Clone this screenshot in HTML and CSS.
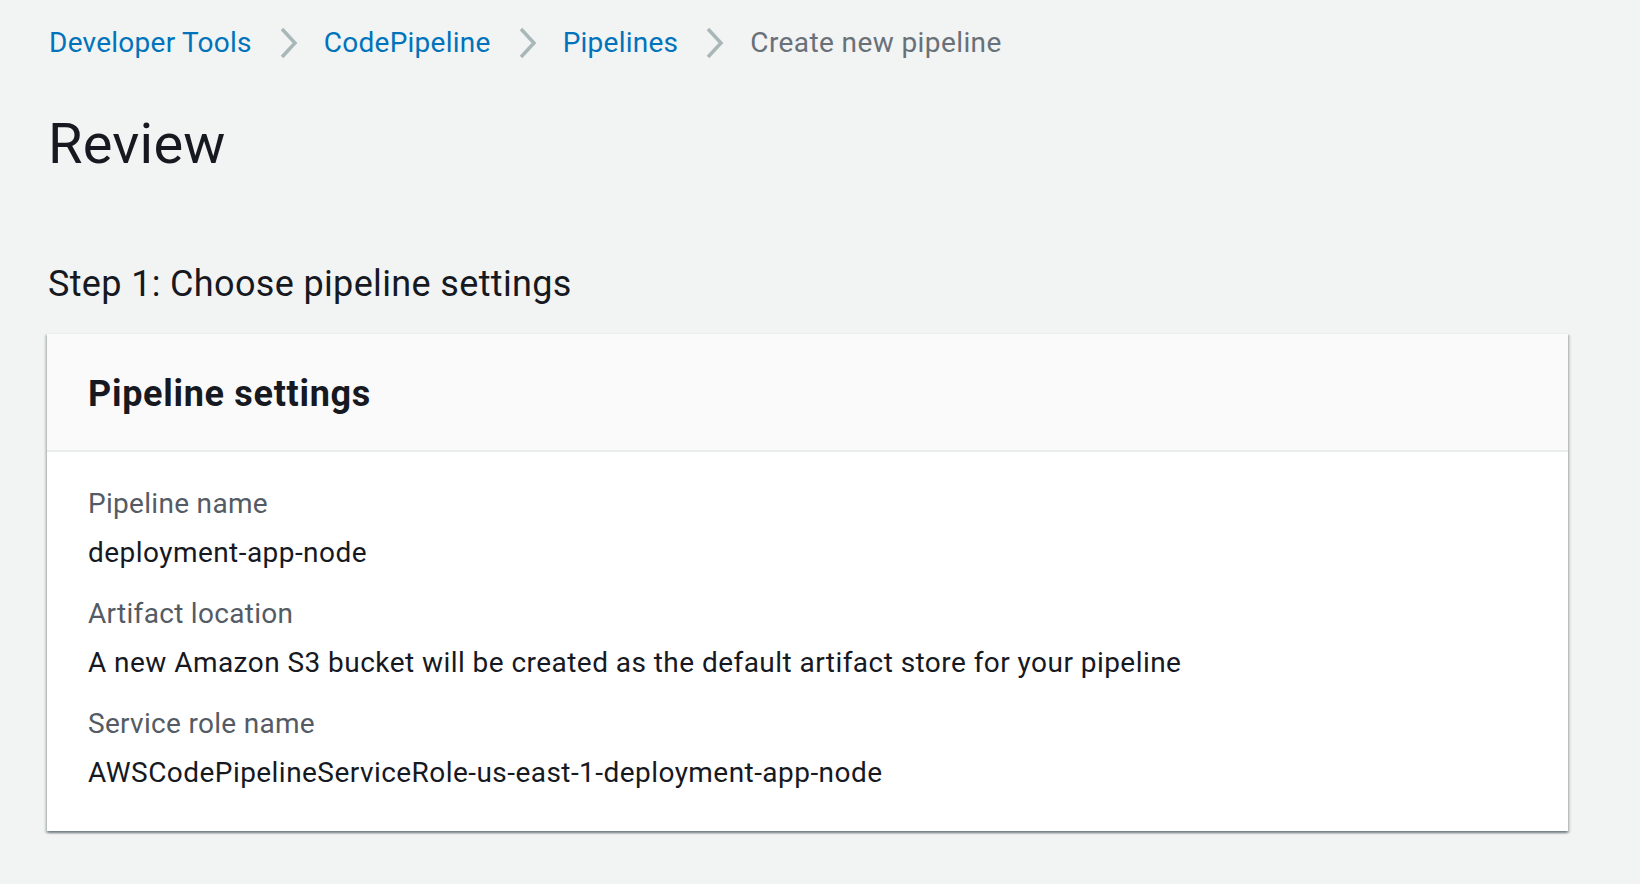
FILE: index.html
```html
<!DOCTYPE html>
<html lang="en">
<head>
<meta charset="utf-8">
<title>Review - Create new pipeline</title>
<link rel="stylesheet" href="styles.css">
</head>
<body>
<div class="page">
  <nav class="breadcrumbs">
    <a class="crumb" href="#">Developer Tools</a>
    <svg class="sep" width="20" height="32" viewBox="0 0 20 32"><path d="M3 2 L16 16 L3 30" fill="none" stroke="#aab7b8" stroke-width="3.5"/></svg>
    <a class="crumb" href="#">CodePipeline</a>
    <svg class="sep" width="20" height="32" viewBox="0 0 20 32"><path d="M3 2 L16 16 L3 30" fill="none" stroke="#aab7b8" stroke-width="3.5"/></svg>
    <a class="crumb" href="#">Pipelines</a>
    <svg class="sep" width="20" height="32" viewBox="0 0 20 32"><path d="M3 2 L16 16 L3 30" fill="none" stroke="#aab7b8" stroke-width="3.5"/></svg>
    <span class="crumb current">Create new pipeline</span>
  </nav>
  <h1 class="title">Review</h1>
  <h2 class="step">Step 1: Choose pipeline settings</h2>
  <section class="card">
    <div class="card-header">
      <h3 class="card-title">Pipeline settings</h3>
    </div>
    <div class="card-body">
      <div class="field">
        <div class="label">Pipeline name</div>
        <div class="value">deployment-app-node</div>
      </div>
      <div class="field">
        <div class="label">Artifact location</div>
        <div class="value">A new Amazon S3 bucket will be created as the default artifact store for your pipeline</div>
      </div>
      <div class="field">
        <div class="label">Service role name</div>
        <div class="value">AWSCodePipelineServiceRole-us-east-1-deployment-app-node</div>
      </div>
    </div>
  </section>
</div>
</body>
</html>
```

FILE: styles.css
```css
html, body {
  margin: 0;
  padding: 0;
  background: #f2f3f3;
  font-family: Roboto, "Open Sans", "Liberation Sans", sans-serif;
  color: #16191f;
}

.page {
  padding: 21px 72px 40px 47px;
}

.breadcrumbs {
  display: flex;
  align-items: center;
  height: 44px;
}

.crumb {
  font-size: 28px;
  line-height: 44px;
  letter-spacing: 0.25px;
  color: #0073bb;
  text-decoration: none;
  padding: 0 2px;
}

.crumb.current {
  color: #687078;
  letter-spacing: 0.4px;
}

.sep {
  margin: 0 23px 0 25px;
  flex: none;
}

.title {
  margin: 0;
  padding-top: 43px;
  padding-left: 1px;
  font-size: 56px;
  line-height: 72px;
  font-weight: 400;
  letter-spacing: 0.2px;
}

.step {
  margin: 0;
  padding-top: 80px;
  padding-left: 1px;
  font-size: 36px;
  line-height: 48px;
  font-weight: 400;
  letter-spacing: 0.35px;
}

.card {
  margin-top: 25px;
  background: #fff;
  border-top: 1px solid #eaeded;
  box-shadow: 0 2px 2px 0 rgba(0, 28, 36, 0.35), 2px 2px 2px 0 rgba(0, 28, 36, 0.15), -2px 2px 2px 0 rgba(0, 28, 36, 0.15);
}

.card-header {
  background: #fafafa;
  border-bottom: 2px solid #eaeded;
  padding: 38px 41px 34px;
}

.card-title {
  margin: 0;
  font-size: 36px;
  line-height: 44px;
  font-weight: 700;
  letter-spacing: 0.7px;
}

.card-body {
  padding: 32px 41px 38px;
  display: flex;
  flex-direction: column;
  gap: 21px;
}

.field {
  display: flex;
  flex-direction: column;
  gap: 9px;
}

.label {
  font-size: 28px;
  line-height: 40px;
  letter-spacing: 0.3px;
  color: #545b64;
}

.value {
  font-size: 28px;
  line-height: 40px;
  letter-spacing: 0.45px;
  color: #16191f;
}
```
